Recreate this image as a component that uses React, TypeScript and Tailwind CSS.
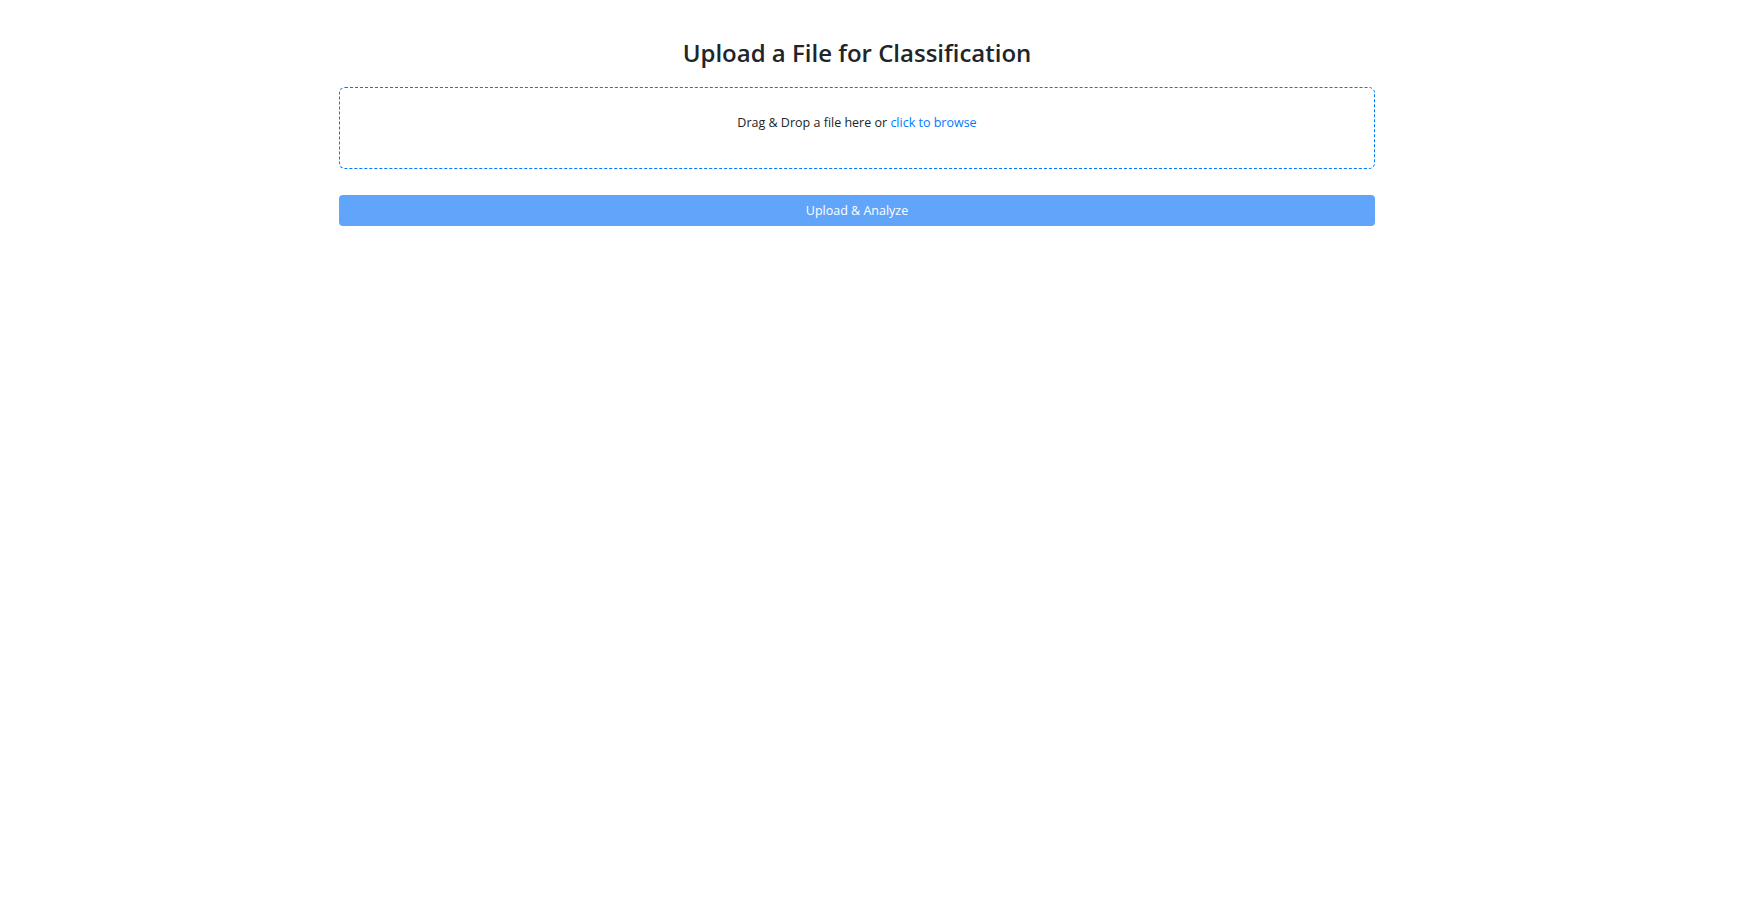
import React, { useRef, useState } from "react";

const App = () => {
  const inputRef = useRef<HTMLInputElement>(null);
  const [file, setFile] = useState<File | null>(null);

  return (
    <div
      className="min-h-screen w-full bg-white text-[#212529]"
      style={{ fontFamily: '"Open Sans", "Noto Sans", sans-serif' }}
    >
      <div className="ml-[339px] w-[1036px] pt-[37px]">
        <h2 className="text-center text-[24px] font-semibold leading-[32px] text-[#212529]">
          Upload a File for Classification
        </h2>
        <div
          onClick={() => inputRef.current?.click()}
          className="mt-[18px] h-[82px] cursor-pointer rounded-[6px] border border-dashed border-[#007bff] pt-[25px] text-center text-[12.5px] leading-[20px]"
        >
          {file ? (
            <span>{file.name}</span>
          ) : (
            <span>
              Drag &amp; Drop a file here or{" "}
              <span className="text-[#007bff]">click to browse</span>
            </span>
          )}
          <input
            ref={inputRef}
            type="file"
            className="hidden"
            onChange={(e) => setFile(e.target.files?.[0] ?? null)}
          />
        </div>
        <button className="mt-[26px] h-[31px] w-full rounded-[4px] bg-[#60a5fa] pt-[2px] text-[12.5px] font-medium text-white">
          Upload &amp; Analyze
        </button>
      </div>
    </div>
  );
};

export default App;
